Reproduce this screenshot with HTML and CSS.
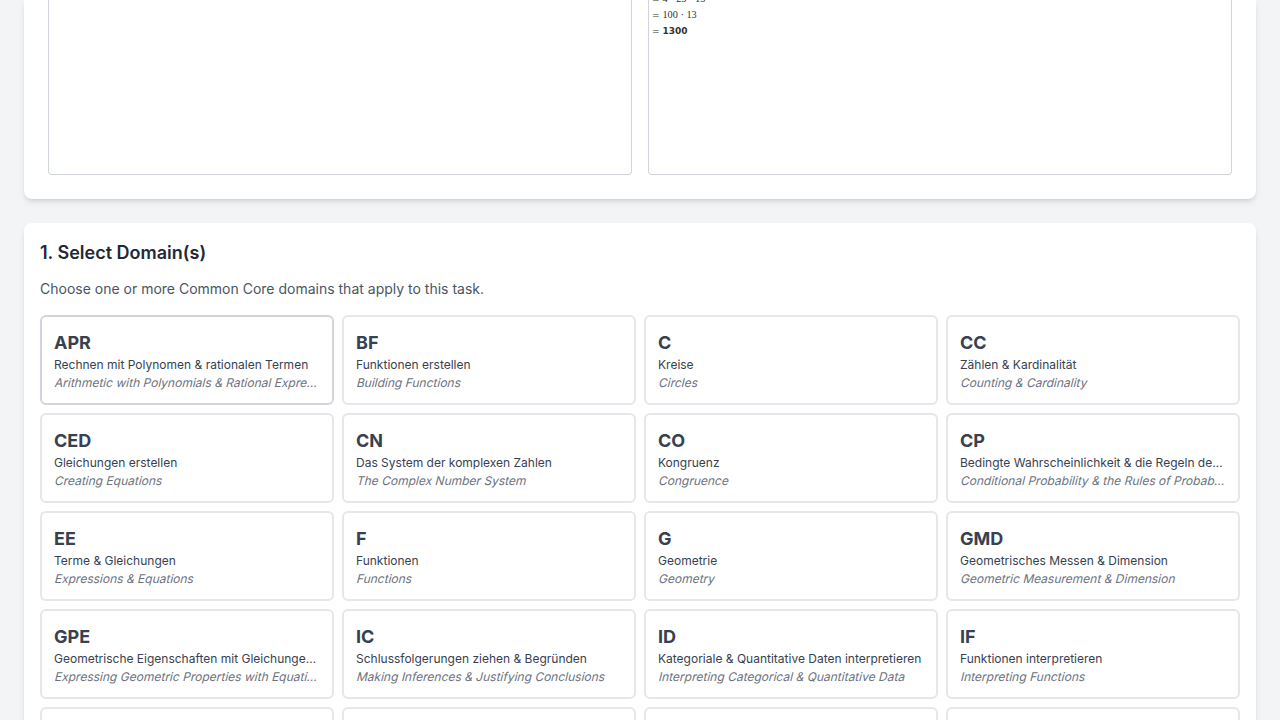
FILE: index.html
```html
<!DOCTYPE html>
<html lang="de">
<head>
<meta charset="utf-8">
<title>Select Domains</title>
<link rel="stylesheet" href="styles.css">
</head>
<body>
<main class="page">
<section class="preview">
<div class="frame"></div>
<div class="frame">
<div class="step">= <span class="math">4 · 25 · 13</span></div>
<div class="step">= <span class="math">100 · 13</span></div>
<div class="step">= <b>1300</b></div>
</div>
</section>
<section class="panel">
<h2 class="title">1. Select Domain(s)</h2>
<p class="hint">Choose one or more Common Core domains that apply to this task.</p>
<div class="grid">
<div class="card active"><div class="code">APR</div><div class="name">Rechnen mit Polynomen &amp; rationalen Termen</div><div class="sub">Arithmetic with Polynomials &amp; Rational Expressions</div></div>
<div class="card"><div class="code">BF</div><div class="name">Funktionen erstellen</div><div class="sub">Building Functions</div></div>
<div class="card"><div class="code">C</div><div class="name">Kreise</div><div class="sub">Circles</div></div>
<div class="card"><div class="code">CC</div><div class="name">Zählen &amp; Kardinalität</div><div class="sub">Counting &amp; Cardinality</div></div>
<div class="card"><div class="code">CED</div><div class="name">Gleichungen erstellen</div><div class="sub">Creating Equations</div></div>
<div class="card"><div class="code">CN</div><div class="name">Das System der komplexen Zahlen</div><div class="sub">The Complex Number System</div></div>
<div class="card"><div class="code">CO</div><div class="name">Kongruenz</div><div class="sub">Congruence</div></div>
<div class="card"><div class="code">CP</div><div class="name">Bedingte Wahrscheinlichkeit &amp; die Regeln der Wahrscheinlichkeit</div><div class="sub">Conditional Probability &amp; the Rules of Probability</div></div>
<div class="card"><div class="code">EE</div><div class="name">Terme &amp; Gleichungen</div><div class="sub">Expressions &amp; Equations</div></div>
<div class="card"><div class="code">F</div><div class="name">Funktionen</div><div class="sub">Functions</div></div>
<div class="card"><div class="code">G</div><div class="name">Geometrie</div><div class="sub">Geometry</div></div>
<div class="card"><div class="code">GMD</div><div class="name">Geometrisches Messen &amp; Dimension</div><div class="sub">Geometric Measurement &amp; Dimension</div></div>
<div class="card"><div class="code">GPE</div><div class="name">Geometrische Eigenschaften mit Gleichungen ausdrücken</div><div class="sub">Expressing Geometric Properties with Equations</div></div>
<div class="card"><div class="code">IC</div><div class="name">Schlussfolgerungen ziehen &amp; Begründen</div><div class="sub">Making Inferences &amp; Justifying Conclusions</div></div>
<div class="card"><div class="code">ID</div><div class="name">Kategoriale &amp; Quantitative Daten interpretieren</div><div class="sub">Interpreting Categorical &amp; Quantitative Data</div></div>
<div class="card"><div class="code">IF</div><div class="name">Funktionen interpretieren</div><div class="sub">Interpreting Functions</div></div>
<div class="card"></div><div class="card"></div><div class="card"></div><div class="card"></div>
</div>
</section>
</main>
</body>
</html>
```

FILE: styles.css
```css
* { box-sizing: border-box; }
body {
  margin: 0;
  background: #f3f4f6;
  font-family: Inter, "Liberation Sans", sans-serif;
  color: #1f2937;
}
.page {
  height: 720px;
  overflow: hidden;
  padding: 0 24px;
  display: flex;
  flex-direction: column;
  gap: 24px;
}
.preview {
  flex: none;
  height: 199px;
  padding: 0 24px 24px;
  display: grid;
  grid-template-columns: 1fr 1fr;
  gap: 16px;
  background: #fff;
  border-radius: 0 0 8px 8px;
  box-shadow: 0 4px 6px -1px rgba(0, 0, 0, .1), 0 2px 4px -2px rgba(0, 0, 0, .1);
}
.frame {
  overflow: hidden;
  border: 1px solid #d1d5db;
  border-top: 0;
  border-radius: 0 0 4px 4px;
  padding-left: 3px;
}
.step {
  height: 16px;
  font: 9px/16px "DejaVu Sans", sans-serif;
  color: #333;
  white-space: nowrap;
}
.step:first-child { margin-top: -9px; }
.math { font: 10.3px/16px "Liberation Serif", serif; }
.panel {
  flex: none;
  padding: 16px;
  background: #fff;
  border-radius: 8px;
  box-shadow: 0 4px 6px -1px rgba(0, 0, 0, .1), 0 2px 4px -2px rgba(0, 0, 0, .1);
}
.title {
  margin: 0 0 12px;
  font-size: 18px;
  line-height: 28px;
  font-weight: 600;
}
.hint {
  margin: 0 0 16px;
  font-size: 14px;
  line-height: 20px;
  color: #4b5563;
}
.grid {
  display: grid;
  grid-template-columns: repeat(4, minmax(0, 1fr));
  gap: 8px;
}
.card {
  height: 90px;
  padding: 12px;
  border: 2px solid #e5e7eb;
  border-radius: 6px;
  color: #374151;
}
.active { border-color: #d1d5db; }
.code {
  font-size: 18px;
  line-height: 28px;
  font-weight: 700;
}
.name, .sub {
  font-size: 12px;
  line-height: 16px;
  white-space: nowrap;
  overflow: hidden;
  text-overflow: ellipsis;
}
.sub {
  margin-top: 2px;
  transform: skewX(-14deg);
  transform-origin: 0 12px;
  color: #6b7280;
}
```
